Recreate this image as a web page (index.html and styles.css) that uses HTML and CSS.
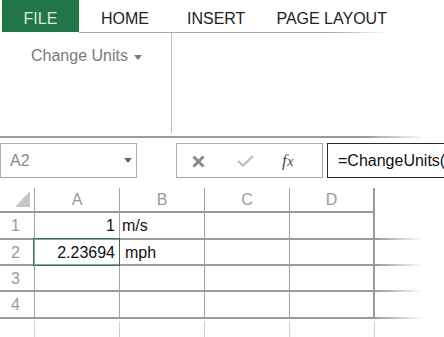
FILE: index.html
```html
<!DOCTYPE html>
<html>
<head>
<meta charset="utf-8">
<link rel="stylesheet" href="styles.css">
</head>
<body>
<div class="app">
  <div class="tabs">
    <div class="tab tab-file">FILE</div>
    <div class="tab tab-home">HOME</div>
    <div class="tab tab-insert">INSERT</div>
    <div class="tab tab-layout">PAGE LAYOUT</div>
  </div>
  <div class="tab-rule"></div>
  <div class="ribbon">
    <div class="group">
      <div class="group-btn">Change Units<span class="caret"></span></div>
    </div>
  </div>
  <div class="ribbon-rule"></div>
  <div class="formula-bar">
    <div class="namebox"><span class="name">A2</span><span class="nb-caret"></span></div>
    <div class="fx-box">
      <svg class="ic ic-x" width="13" height="13" viewBox="0 0 13 13"><path d="M1.5 1.5L11.5 11.5M11.5 1.5L1.5 11.5" stroke="#8a8a8a" stroke-width="3" fill="none"/></svg>
      <svg class="ic ic-check" width="17" height="12" viewBox="0 0 17 12"><path d="M1 6L6 10.5L16 1" stroke="#bdbdbd" stroke-width="2.2" fill="none"/></svg>
      <span class="fx">f<span class="fx-x">x</span></span>
    </div>
    <div class="formula-input">=ChangeUnits(</div>
  </div>
  <div class="sheet">
    <div class="c corner"><span class="tri"></span></div>
    <div class="c ch">A</div>
    <div class="c ch">B</div>
    <div class="c ch">C</div>
    <div class="c ch ch-last">D</div>
    <div class="c ch-extra"></div>

    <div class="c rh">1</div>
    <div class="c cell num">1</div>
    <div class="c cell txt">m/s</div>
    <div class="c cell"></div>
    <div class="c cell cell-last"></div>
    <div class="c extra"></div>

    <div class="c rh">2</div>
    <div class="c cell num sel">2.23694</div>
    <div class="c cell txt txt2">mph</div>
    <div class="c cell"></div>
    <div class="c cell cell-last"></div>
    <div class="c extra"></div>

    <div class="c rh">3</div>
    <div class="c cell"></div>
    <div class="c cell"></div>
    <div class="c cell"></div>
    <div class="c cell cell-last"></div>
    <div class="c extra"></div>

    <div class="c rh">4</div>
    <div class="c cell"></div>
    <div class="c cell"></div>
    <div class="c cell"></div>
    <div class="c cell cell-last"></div>
    <div class="c extra"></div>

    <div class="c tail tail-rh"></div>
    <div class="c tail"></div>
    <div class="c tail"></div>
    <div class="c tail"></div>
    <div class="c tail"></div>
    <div class="c tail-extra"></div>
  </div>
</div>
</body>
</html>
```

FILE: styles.css
```css
html, body {
  margin: 0;
  padding: 0;
  background: #fff;
}
body {
  width: 444px;
  height: 337px;
  overflow: hidden;
  font-family: "Liberation Sans", Arial, sans-serif;
}
.app {
  width: 444px;
}
.tabs {
  display: flex;
  height: 32px;
}
.tab {
  font-size: 16px;
  line-height: 26px;
  padding-top: 6px;
  color: #222;
  white-space: nowrap;
}
.tab-file {
  margin-left: 2px;
  width: 77px;
  text-align: center;
  background: #227548;
  color: #d3eed9;
}
.tab-home { margin-left: 22px; }
.tab-insert { margin-left: 38px; }
.tab-layout { margin-left: 31px; }
.tab-rule {
  margin-left: 79px;
  width: 312px;
  height: 1px;
  background: linear-gradient(to right, #a8a8a8 0, #a8a8a8 250px, rgba(168,168,168,0) 312px);
}
.ribbon {
  display: flex;
  height: 103px;
}
.group {
  width: 171px;
  height: 100px;
  border-right: 1px solid #bdbdbd;
}
.group-btn {
  margin-left: 31px;
  margin-top: 14px;
  font-size: 16px;
  line-height: 18px;
  color: #7a7a7a;
  display: flex;
  align-items: center;
}
.caret {
  width: 0;
  height: 0;
  margin-left: 6px;
  margin-top: 2px;
  border-left: 4px solid transparent;
  border-right: 4px solid transparent;
  border-top: 5px solid #7a7a7a;
}
.ribbon-rule {
  height: 2px;
  width: 430px;
  background: linear-gradient(to right, #9a9a9a 0, #9a9a9a 365px, rgba(154,154,154,0) 425px);
}
.formula-bar {
  display: flex;
  margin-top: 5px;
  height: 35px;
}
.namebox {
  box-sizing: border-box;
  width: 137px;
  height: 35px;
  border: 1px solid #ababab;
  display: flex;
  align-items: center;
  justify-content: space-between;
  padding: 0 4px 0 9px;
}
.name {
  font-size: 16px;
  color: #8a8a8a;
}
.nb-caret {
  width: 0;
  height: 0;
  border-left: 4.5px solid transparent;
  border-right: 4.5px solid transparent;
  border-top: 5px solid #6a6a6a;
}
.fx-box {
  box-sizing: border-box;
  margin-left: 39px;
  width: 147px;
  height: 35px;
  border: 1px solid #ababab;
  display: flex;
  align-items: center;
  padding-left: 15px;
}
.ic-x { margin-top: 1px; }
.ic-check { margin-left: 32px; margin-top: 1px; }
.fx {
  margin-left: 28px;
  font-family: "Liberation Serif", "DejaVu Serif", serif;
  font-style: italic;
  font-size: 17px;
  color: #4a4a4a;
  letter-spacing: 0.5px;
}
.fx-x {
  font-size: 14px;
}
.formula-input {
  box-sizing: border-box;
  margin-left: 4px;
  flex: 1;
  height: 35px;
  border: 1px solid #2a2a2a;
  border-right: none;
  font-size: 16px;
  line-height: 33px;
  padding-left: 10px;
  color: #111;
  white-space: nowrap;
  overflow: hidden;
}
.sheet {
  margin-top: 10px;
  display: grid;
  grid-template-columns: 35px 85px 85px 85px 85px 69px;
  grid-template-rows: 25px 27px 26px 26px 27px 20px;
}
.c {
  box-sizing: border-box;
  position: relative;
}
.corner, .ch, .rh, .cell {
  border-right: 1px solid #a5a5a5;
  border-bottom: 2px solid #9a9a9a;
}
.ch, .rh {
  color: #9a9a9a;
  font-size: 16px;
  text-align: center;
}
.ch {
  line-height: 24px;
}
.rh {
  line-height: 25px;
  text-align: left;
  padding-left: 11px;
}
.ch-last, .cell-last {
  border-right: 2px solid #9a9a9a;
}
.corner .tri {
  position: absolute;
  right: 4px;
  bottom: 4px;
  width: 0;
  height: 0;
  border-left: 15px solid transparent;
  border-bottom: 16px solid #c6c6c6;
}
.extra {
  background: linear-gradient(to right, #9a9a9a 0, rgba(154,154,154,0.6) 20px, rgba(154,154,154,0) 48px) left bottom / 100% 2px no-repeat;
}
.cell {
  font-size: 16px;
  line-height: 25px;
  color: #111;
  white-space: nowrap;
}
.num {
  text-align: right;
  padding-right: 4px;
}
.txt {
  padding-left: 2px;
}
.txt2 {
  padding-left: 5px;
}
.sel::after {
  content: "";
  position: absolute;
  left: -2px;
  top: -2px;
  right: -1px;
  bottom: -2px;
  border: 1px solid #2f7a4f;
}
.tail {
  border-right: 1px solid #d0d0d0;
  margin-top: 2px;
}
.tail-rh {
  border-right: 1px solid #d8d8d8;
}
```
